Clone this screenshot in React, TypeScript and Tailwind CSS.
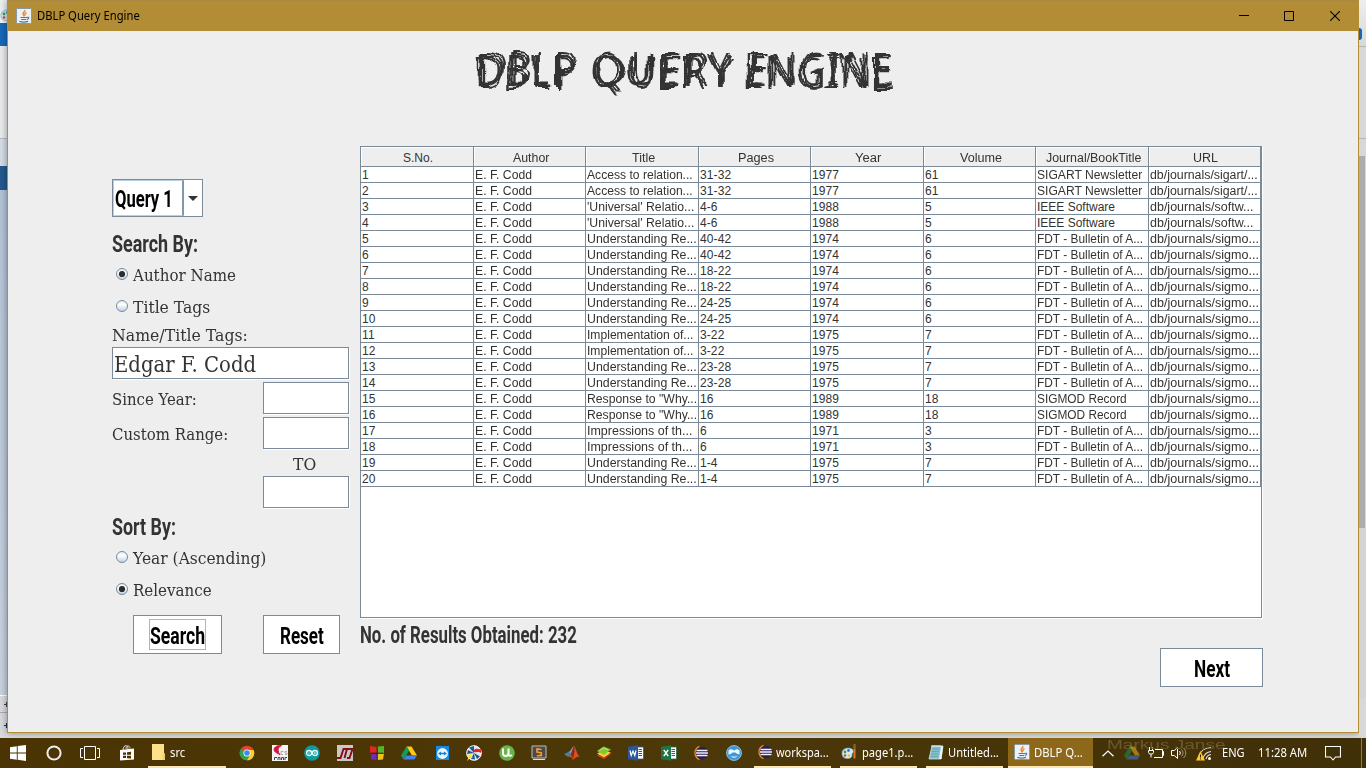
import { useLayoutEffect, useRef, useState, type ReactNode } from "react";

const UI = "font-['Noto_Sans',sans-serif]";
const SERIF = "font-['DejaVu_Serif','Liberation_Serif',serif]";
const HEAVY = "font-['Roboto','Liberation_Sans',sans-serif] font-bold";

/* Stretches or squeezes one line of text to the width of its box. */
function Fit({ className = "", children }: { className?: string; children: string }) {
  const box = useRef<HTMLSpanElement>(null);
  const text = useRef<HTMLSpanElement>(null);
  const [scale, setScale] = useState(1);
  useLayoutEffect(() => {
    if (box.current && text.current) {
      setScale(box.current.clientWidth / text.current.offsetWidth);
    }
  }, [children]);
  return (
    <span ref={box} className={`block shrink-0 whitespace-nowrap ${className}`}>
      <span ref={text} className="inline-block origin-left" style={{ transform: `scaleX(${scale})` }}>
        {children}
      </span>
    </span>
  );
}

function Icon({ children, className = "size-4", box = "0 0 16 16" }: { children: ReactNode; className?: string; box?: string }) {
  return (
    <svg viewBox={box} className={`shrink-0 ${className}`} fill="none">
      {children}
    </svg>
  );
}

const JavaIcon = () => (
  <Icon>
    <rect x=".5" y=".5" width="15" height="15" rx="1" fill="#eef1f4" stroke="#8798a6" />
    <path d="M8.800 2c1 1.500-3 2.600-1.600 4.500.4.700 1 1 .6 1.900M10.500 4.600c-1.600.8-2.200 1.500-1.200 2.900" stroke="#ee7d1c" strokeWidth="1.300" />
    <path d="M4.500 9.500h6.600M5.200 11.500h5M3.400 13.400c2.500.9 6.500.8 8.700 0M11.300 9.300c2-.4 1.800 1.600-.4 2" stroke="#4a7899" strokeWidth="1.200" />
  </Icon>
);
const Eclipse = () => (
  <Icon>
    <path d="M6.500 1.500A7 7 0 0 0 6.500 14.500" stroke="#f28b1d" strokeWidth="1.500" />
    <circle cx="9" cy="8" r="6.300" fill="#2b1f52" />
    <path d="M3.500 5.500h11M3 8h12M3.500 10.500h11" stroke="#f2f0f8" strokeWidth="1.300" />
  </Icon>
);
const Drive = () => (
  <Icon>
    <path d="M5.500 1.500h5L16 10.500h-5z" fill="#fbc916" />
    <path d="M5.500 1.500 8 5.800 2.700 14.500 0 10.500z" fill="#159b58" />
    <path d="M5.300 10.500H16l-2.600 4H2.700z" fill="#4381ee" />
  </Icon>
);
const Office = ({ fill, mark }: { fill: string; mark: ReactNode }) => (
  <Icon>
    <path d="M9 2h6.500v12H9z" fill="#fff" stroke={fill} strokeWidth=".8" />
    <path d="M10.500 4.500H14M10.500 6.500H14M10.500 8.500H14M10.500 10.500H14" stroke={fill} />
    <path d="M0 1.800 10 .2v15.600L0 14.200z" fill={fill} />
    {mark}
  </Icon>
);

const pinned: ReactNode[] = [
  <Icon key="chrome">
    <circle cx="8" cy="8" r="7.300" fill="#e04536" />
    <path d="M8 8 1.700 4.200A7.300 7.300 0 0 0 8 15.300l3.200-5.500z" fill="#2da152" />
    <path d="M8 15.300A7.300 7.300 0 0 0 14.600 4.900H8l3.200 4.900z" fill="#fbcd28" />
    <circle cx="8" cy="8" r="3.600" fill="#fff" /><circle cx="8" cy="8" r="2.800" fill="#4285ec" />
  </Icon>,
  <Icon key="cs">
    <path d="M0 0h16v16H0z" fill="#f5f3f3" />
    <path d="M9.500.5C4 .2 1 3 2.500 6c1 2 4 2.300 5.500 4C5.500 6 5 3 9.500.5z" fill="#d3163c" stroke="#d3163c" />
    <path d="M11.500 6.500H9v3h2M15 6.500h-2V8h2v1.500h-2" stroke="#999" strokeWidth=".8" />
    <path d="M2.500 15v-2.500H5M6 15v-2.500h2V15M9.500 15v-2.500h2V15M15 12.500h-2V15" stroke="#444" />
  </Icon>,
  <Icon key="arduino">
    <circle cx="8" cy="8" r="7.800" fill="#0b9ba0" />
    <circle cx="5.100" cy="8" r="2.500" stroke="#eefafa" strokeWidth="1.300" /><circle cx="10.900" cy="8" r="2.500" stroke="#eefafa" strokeWidth="1.300" />
    <path d="M4.200 8h1.700M10 8h1.800M10.900 7.100v1.800" stroke="#fff" strokeWidth=".7" />
  </Icon>,
  <Icon key="lt">
    <path d="M0 0h16v16H0z" fill="#c9c7c8" />
    <path d="M0 13h3.500L6.500 4H10L7.500 13M10 13h2.500l3-9M9 4h7" stroke="#840d16" strokeWidth="1.900" />
  </Icon>,
  <Icon key="squares">
    <path d="M1 1 8 2v6H1z" fill="#d92b20" /><path d="M8.500 1.500 15 1v7H8.500z" fill="#55b52b" />
    <path d="M2 8.500h6V15l-6-.5z" fill="#6a2fb4" /><path d="M8.500 8.500H15l-1 6-5.500.5z" fill="#efc21c" />
    <path d="M8.200 1.500V15M1.500 8.200h13" stroke="#2a1a10" strokeWidth=".9" />
  </Icon>,
  <Drive key="drive" />,
  <Icon key="tv">
    <rect x="2" y="1" width="13" height="14" fill="#128aec" /><circle cx="8.500" cy="8.500" r="5.400" fill="#e9f4fc" />
    <path d="m4 8.500 3-2v1.300h3V6.500l3 2-3 2V9.200H7v1.300z" fill="#197fd4" />
  </Icon>,
  <Icon key="wheel">
    <circle cx="8" cy="8" r="7.300" fill="#dce8f2" stroke="#fff" />
    <path d="M8 8 3 2.500 8 1zM8 8 1 9l1-4zM8 8l1 6.500-4-.5zM8 8l6 3.500L11 14z" fill="#24568f" />
    <path d="M8 5c2-2 4-1 7-.5V8c-3-2-4 0-7-1z" fill="#e22" /><path d="m1 16 1.500-4L0 10l3 .5L5 8l0 3 2 1.500-3 .5z" fill="#fbe437" />
  </Icon>,
  <Icon key="ut">
    <circle cx="8" cy="8" r="7.800" fill="#69b34a" />
    <path d="M4 3.500v5c0 3 5 3.500 5.500 0v-5 5.500c.2 2.500 2 2 3.500 1" stroke="#fff" strokeWidth="2" />
  </Icon>,
  <Icon key="sublime">
    <path d="M1 1h14v12H1z" fill="#4a4a4a" stroke="#bcbcbc" /><path d="M2 14.500h12" stroke="#ddd" />
    <path d="M10.500 4.500 6 4v3l4.300.8v2.600l-4.500.4" stroke="#ff9b27" strokeWidth="1.600" />
  </Icon>,
  <Icon key="matlab">
    <path d="m0 9 4.500-2L7 9l-3 3z" fill="#3c86b5" /><path d="M4.500 7C7 6 8 2 10 1L7 9z" fill="#6ea6c6" />
    <path d="M10 1c2 2 3 9 6 11-3-1-5 .500-7 3C8 12 6 11 4 12l3-3z" fill="#d9511c" /><path d="M10 1c1 3 .5 8-1 13-1-3-1.500-2-2-5z" fill="#8b2a17" />
  </Icon>,
  <Icon key="stacks">
    <path d="m1 10.500 6-3.500 8 2-7 5z" fill="#e13428" /><path d="m1 8.500 6-3 8 2L8 12.300z" fill="#f2d633" />
    <path d="M1 6 7.500 1.500 15 4.500 8 10z" fill="#83c537" /><path d="m3.500 5.500 4-2.500 4.500 1.700" stroke="#b9e777" />
  </Icon>,
  <Office key="word" fill="#2a5699" mark={<path d="m2 5.500 1.200 5L5 6l1.800 4.500L8 5.500" stroke="#fff" strokeWidth="1.200" />} />,
  <Office key="excel" fill="#207346" mark={<path d="m2.800 4.800 4.400 6.400M7.200 4.800 2.800 11.200" stroke="#fff" strokeWidth="1.500" />} />,
  <Eclipse key="eclipse" />,
  <Icon key="blue">
    <circle cx="8" cy="8" r="7.500" fill="#3d98d8" stroke="#9ccbea" strokeWidth=".8" />
    <path d="M2.500 9.500V5.500L5 4l3 1.500L11 4l2.500 1.500v4l-2.500-.7L9.500 7.500h-3L5 8.800zM4 11.500c2.500 1.500 5.500 1.500 8 0" fill="#eef7fc" />
  </Icon>,
];

const PaintIcon = () => (
  <Icon>
    <path d="M1 9C1 4 9 2.500 12 6c1.500 3-1.500 3-1 5s-2 4-5.500 3.500S1 12 1 9z" fill="#d4e9f3" stroke="#6fa7c1" strokeWidth=".7" />
    <circle cx="4" cy="8" r="1.400" fill="#3fa23c" /><circle cx="7.500" cy="6.500" r="1.400" fill="#3a6fce" />
    <circle cx="4" cy="11.500" r="1.300" fill="#dd442f" /><circle cx="8" cy="11.500" r="1.200" fill="#eabb26" />
    <path d="M13.500 5v9.500" stroke="#dc7721" strokeWidth="2" /><path d="M13.500 0v5" stroke="#8b5a2e" strokeWidth="2.500" />
  </Icon>
);
const NotepadIcon = () => (
  <Icon>
    <path d="M4 2h11l-2 13H1z" fill="#86bfca" stroke="#cfe9ee" strokeWidth=".8" />
    <path d="m13 2 2 .5L13.500 15H11z" fill="#e8f4f6" /><path d="M4 1v2M6 1v2M8 1v2M10 1v2M12 1v2" stroke="#e9eff0" />
    <path d="M4 5h7.500M3.500 7.500h7.500M3 10h7.500M2.500 12.500H10" stroke="#5d9eae" strokeWidth=".7" />
  </Icon>
);

const columns = [
  ["S.No.", "w-[113px]", "w-[30px]"],
  ["Author", "w-[112px]", "w-[36px]"],
  ["Title", "w-[113px]", "w-[23px]"],
  ["Pages", "w-[112px]", "w-[36px]"],
  ["Year", "w-[113px]", "w-[26px]"],
  ["Volume", "w-[112px]", "w-[42px]"],
  ["Journal/BookTitle", "w-[113px]", "w-[95px]"],
  ["URL", "w-[112px]", "w-[25px]"],
];

const textWidths: Record<string, string> = {
  "E. F. Codd": "w-[57px]",
  "Access to relation...": "w-[106px]",
  "'Universal' Relatio...": "w-[107px]",
  "Understanding Re...": "w-[110px]",
  "Implementation of...": "w-[106px]",
  'Response to "Why...': "w-[110px]",
  "Impressions of th...": "w-[105px]",
  "SIGART Newsletter": "w-[105px]",
  "IEEE Software": "w-[78px]",
  "FDT - Bulletin of A...": "w-[106px]",
  "SIGMOD Record": "w-[90px]",
  "db/journals/sigart/...": "w-[108px]",
  "db/journals/softw...": "w-[103px]",
  "db/journals/sigmo...": "w-[109px]",
};

const FDT = "FDT - Bulletin of A...";
const SIGMO = "db/journals/sigmo...";
const UND = "Understanding Re...";
const papers = [
  ["Access to relation...", "31-32", "1977", "61", "SIGART Newsletter", "db/journals/sigart/..."],
  ["'Universal' Relatio...", "4-6", "1988", "5", "IEEE Software", "db/journals/softw..."],
  [UND, "40-42", "1974", "6", FDT, SIGMO],
  [UND, "18-22", "1974", "6", FDT, SIGMO],
  [UND, "24-25", "1974", "6", FDT, SIGMO],
  ["Implementation of...", "3-22", "1975", "7", FDT, SIGMO],
  [UND, "23-28", "1975", "7", FDT, SIGMO],
  ['Response to "Why...', "16", "1989", "18", "SIGMOD Record", SIGMO],
  ["Impressions of th...", "6", "1971", "3", FDT, SIGMO],
  [UND, "1-4", "1975", "7", FDT, SIGMO],
];
const rows = papers.flatMap((p) => [p, p]).map((p, i) => [String(i + 1), "E. F. Codd", ...p]);

function ResultsTable() {
  return (
    <div className="flex h-[472px] w-[902px] flex-col border border-[#7a8a99] bg-white font-['Liberation_Sans',sans-serif] text-[12px] text-[#333] shadow-[1px_1px_0_#fff]">
      <div className="flex h-5 w-[900px] shrink-0">
        {columns.map(([name, w, tw]) => (
          <div key={name} className={`flex h-5 items-center justify-center border-r border-b border-[#7a8a99] bg-[#eee] pt-0.5 pl-0.5 shadow-[inset_1px_1px_0_#fff] ${w}`}>
            <Fit className={tw}>{name}</Fit>
          </div>
        ))}
      </div>
      {rows.map((row) => (
        <div key={row[0]} className="flex h-4 w-[900px] shrink-0">
          {row.map((cell, c) => (
            <div key={c} className={`h-4 border-r border-b border-[#7a8a99] pl-px leading-[16px] ${columns[c][1]}`}>
              {textWidths[cell] ? <Fit className={textWidths[cell]}>{cell}</Fit> : <span className="block tracking-[0.1px]">{cell}</span>}
            </div>
          ))}
        </div>
      ))}
    </div>
  );
}

function Radio({ label, width, checked = false }: { label: string; width: string; checked?: boolean }) {
  return (
    <div className="flex h-8 items-center pl-1">
      <Icon className="mr-[5px] size-3" box="0 0 12 12">
        <defs>
          <linearGradient id="radio" x1="0" y1="0" x2="0" y2="1">
            <stop stopColor="#dce8f3" /><stop offset=".35" stopColor="#fff" /><stop offset="1" stopColor="#b8cfe5" />
          </linearGradient>
        </defs>
        <circle cx="6" cy="6" r="5.500" fill="url(#radio)" stroke="#7a8a99" />
        {checked && <circle cx="6" cy="6" r="3.100" fill="#2c2c2c" />}
      </Icon>
      <Fit className={`pt-1 text-[17px] ${SERIF} ${width}`}>{label}</Fit>
    </div>
  );
}

const Field = ({ width, children }: { width: string; children?: ReactNode }) => (
  <div className={`flex h-8 shrink-0 items-center border border-[#7a8a99] bg-white shadow-[1px_1px_0_#fff] ${width}`}>{children}</div>
);

const Heading = ({ width, children }: { width: string; children: string }) => (
  <Fit className={`text-[24px] leading-8 text-[#333] ${HEAVY} ${width}`}>{children}</Fit>
);

function Button({ box, width, focused = false, children }: { box: string; width: string; focused?: boolean; children: string }) {
  return (
    <button className={`flex h-[39px] items-center justify-center border border-[#7a8a99] bg-white text-black ${box}`}>
      <span className={`flex h-[31px] items-center border pt-0.5 ${focused ? "border-[#a3b8cc]" : "border-transparent"}`}>
        <Fit className={`text-[24px] leading-7 ${HEAVY} ${width}`}>{children}</Fit>
      </span>
    </button>
  );
}

function SearchForm() {
  return (
    <div className="flex w-[237px] flex-col pt-[33px] text-[#333]">
      <div className="flex h-[38px] w-[91px] border border-[#7a8a99] bg-white">
        <div className="flex w-[71px] items-center border border-r-2 border-[#b8cfe5] border-r-[#8397aa] pt-0.5 pl-px">
          <Fit className={`w-[58px] text-[24px] leading-8 text-black ${HEAVY}`}>Query 1</Fit>
        </div>
        <div className="flex flex-1 items-center justify-center">
          <Icon className="h-[5px] w-[10px]" box="0 0 10 5"><path d="M0 0h10L5 5z" fill="#333" /></Icon>
        </div>
      </div>
      <div className="mt-[11px] h-[30px]"><Heading width="w-[86px]">Search By:</Heading></div>
      <Radio label="Author Name" width="w-[103px]" checked />
      <Radio label="Title Tags" width="w-[77px]" />
      <div className="flex h-[25px] items-center pt-0.5"><Fit className={`text-[17px] w-[136px] ${SERIF}`}>Name/Title Tags:</Fit></div>
      <Field width="w-[237px]"><Fit className={`ml-px w-[142px] pt-0.5 text-[23px] leading-7 ${SERIF}`}>Edgar F. Codd</Fit></Field>
      <div className="mt-[3px] flex items-center justify-between">
        <Fit className={`w-[85px] pt-[3px] text-[17px] ${SERIF}`}>Since Year:</Fit><Field width="w-[86px]" />
      </div>
      <div className="mt-[3px] flex items-center justify-between">
        <Fit className={`w-[116px] pt-[3px] text-[17px] ${SERIF}`}>Custom Range:</Fit><Field width="w-[86px]" />
      </div>
      <div className="flex h-[27px] items-center pt-1 pl-[181px]"><Fit className={`text-[17px] w-[23px] ${SERIF}`}>TO</Fit></div>
      <div className="flex justify-end"><Field width="w-[86px]" /></div>
      <div className="mt-[3px] h-[30px]"><Heading width="w-[64px]">Sort By:</Heading></div>
      <Radio label="Year (Ascending)" width="w-[133px]" />
      <Radio label="Relevance" width="w-[79px]" checked />
      <div className="mt-[10px] flex pl-[21px]">
        <Button box="w-[89px] mr-[41px]" width="w-[55px]" focused>Search</Button>
        <Button box="w-[77px]" width="w-[44px]">Reset</Button>
      </div>
    </div>
  );
}

function SketchTitle() {
  return (
    <h1 className="flex h-[115px] items-start pt-[11px] pl-[467px] font-['Noto_Sans',sans-serif] text-[47px] leading-[54px] font-medium text-[#333]">
      <svg className="size-0">
        <filter id="sketch" x="-5%" y="-10%" width="110%" height="120%" colorInterpolationFilters="sRGB">
          <feTurbulence type="fractalNoise" baseFrequency=".045 .03" numOctaves="1" seed="3" result="n1" />
          <feTurbulence type="fractalNoise" baseFrequency=".035 .03" numOctaves="1" seed="18" result="n2" />
          <feTurbulence type="fractalNoise" baseFrequency=".05 .04" numOctaves="1" seed="41" result="n3" />
          <feMorphology in="SourceGraphic" operator="erode" radius="1 .5" result="thin" />
          <feDisplacementMap in="thin" in2="n1" scale="12" xChannelSelector="R" yChannelSelector="G" result="a" />
          <feOffset in="thin" dx="2" dy="-1" result="b0" />
          <feDisplacementMap in="b0" in2="n2" scale="14" xChannelSelector="G" yChannelSelector="R" result="b" />
          <feOffset in="thin" dx="-2" dy="1" result="c0" />
          <feDisplacementMap in="c0" in2="n3" scale="14" xChannelSelector="B" yChannelSelector="G" result="c" />
          <feOffset in="thin" dx="0" dy="2" result="d0" />
          <feDisplacementMap in="d0" in2="n2" scale="16" xChannelSelector="B" yChannelSelector="R" result="d" />
          <feMerge><feMergeNode in="a" /><feMergeNode in="b" /><feMergeNode in="c" /><feMergeNode in="d" /></feMerge>
        </filter>
      </svg>
      <span className="flex [filter:url(#sketch)]">
        <Fit className="mr-[15px] w-[102px]">DBLP</Fit>
        <Fit className="mr-[12px] w-[141px]">QUERY</Fit>
        <Fit className="w-[147px]">ENGINE</Fit>
      </span>
    </h1>
  );
}

function QueryWindow() {
  return (
    <div className="flex h-[733px] w-[1352px] shrink-0 flex-col border border-t-0 border-[#b38e36] bg-[#eee] shadow-[0_0_7px_rgba(0,0,0,.4)]">
      <div className="flex h-[31px] shrink-0 items-center border-t border-[#a9883f] bg-[#b38d35] pl-2">
        <JavaIcon />
        <Fit className={`ml-[5px] w-[103px] text-[12px] text-black ${UI}`}>DBLP Query Engine</Fit>
        <div className="ml-auto flex text-black">
          <Icon className="mr-[35px] size-[10px]" box="0 0 10 10"><path d="M0 4.500h10" stroke="currentColor" /></Icon>
          <Icon className="mr-[36px] size-[10px]" box="0 0 10 10"><path d="M.5.5h9v9h-9z" stroke="currentColor" /></Icon>
          <Icon className="mr-[18px] size-[10px]" box="0 0 10 10"><path d="m0 0 10 10M10 0 0 10" stroke="currentColor" strokeWidth="1.100" /></Icon>
        </div>
      </div>
      <SketchTitle />
      <div className="flex pl-[104px]">
        <SearchForm />
        <div className="ml-[11px] flex w-[903px] flex-col">
          <ResultsTable />
          <div className="h-[30px] pt-px"><Heading width="w-[217px]">No. of Results Obtained: 232</Heading></div>
          <div className="flex justify-end"><Button box="w-[103px]" width="w-[36px]">Next</Button></div>
        </div>
      </div>
    </div>
  );
}

function Task({ box, icon, label, width, active = false }: { box: string; icon: ReactNode; label: string; width: string; active?: boolean }) {
  return (
    <div className={`flex h-[30px] shrink-0 items-center border-b-2 border-[#fde5b0] ${active ? "bg-[#8d681a]" : ""} ${box}`}>
      {icon}
      <Fit className={`pt-px ${width}`}>{label}</Fit>
    </div>
  );
}

function Taskbar() {
  return (
    <div className={`relative flex h-[30px] w-[1366px] shrink-0 items-center overflow-hidden bg-linear-to-r from-[#4b3403] via-[#4d3808] to-[#403008] text-[12px] text-white ${UI}`}>
      <div className="absolute top-0 left-[1107px] text-[#6c5932]"><Fit className="w-[119px] font-['Liberation_Sans',sans-serif] text-[12px] leading-[14px]">Markus Janse</Fit></div>
      <Icon className="ml-[10px] size-4"><path d="m0 2.200 6.800-.9v6.200H0zM7.700 1.100 16 0v7.500H7.700zM0 8.400h6.800v6.300L0 13.800zM7.700 8.400H16V16l-8.300-1.200z" fill="#fff" /></Icon>
      <Icon className="ml-5 size-4"><circle cx="8" cy="8" r="6.600" stroke="#eee" strokeWidth="2" /></Icon>
      <Icon className="ml-[18px] h-4 w-5" box="0 0 20 16"><path d="M4.500 1.500h11v13h-11zM3 3.500H.5v9H3M17 3.500h2.500v9H17" stroke="#fff" /></Icon>
      <Icon className="ml-[19px] size-4">
        <path d="m1 5 14-1.500v11L1 15.500z" fill="#fff" /><path d="M4 5C4 0 9-1 9 4M7 4c0-4 4-4 4-.5" stroke="#ddd" />
        <path d="M4 7.500h3v2.300H4zM8 7.200l4-.4v3H8zM4 10.800h3V13H4zM8 10.800h4v2.800l-4-.4z" fill="#4b3403" />
      </Icon>
      <Task box="ml-[13px] w-[78px] pl-1" label="src" width="ml-[5px] w-[15px]" icon={
        <Icon className="h-4 w-[13px]" box="0 0 13 16"><path d="M0 0h12v9l1 1v6H0z" fill="#ffe08a" /><path d="M10.500 9.500H13V16h-2.500z" fill="#f4cd67" /></Icon>
      } />
      <div className="ml-[5px] flex w-[519px] shrink-0">
        {pinned.map((icon, i) => <div key={i} className="flex flex-1 justify-center">{icon}</div>)}
      </div>
      <Task box="ml-[4px] w-[77px] pl-[3px]" label="workspa..." width="ml-[3px] w-[53px]" icon={<Eclipse />} />
      <Task box="ml-[9px] w-[77px] pl-[1px]" label="page1.p..." width="ml-[5px] w-[51px]" icon={<PaintIcon />} />
      <Task box="ml-[9px] w-[77px] pl-[2px]" label="Untitled..." width="ml-[4px] w-[51px]" icon={<NotepadIcon />} />
      <Task box="ml-[5px] w-[85px] pl-[6px]" label="DBLP Q..." width="ml-[4px] w-[49px]" icon={<JavaIcon />} active />
      <Icon className="ml-[9px] h-[7px] w-3" box="0 0 12 7"><path d="m.5 6.300 5.500-5.300 5.500 5.300" stroke="#fff" strokeWidth="1.200" /></Icon>
      <div className="ml-[10px] opacity-50"><Drive /></div>
      <Icon className="ml-[8px] h-4 w-4"><path d="M7 4.500h7.500v8H6M14.500 6.500h1v4h-1M1.500 2v3M4.500 2v3M.5 5.500h5v2l-1 1.500h-3l-1-1.500zM3 9v3.500" stroke="#fff" /></Icon>
      <Icon className="ml-[7px] h-4 w-[17px]" box="0 0 17 16">
        <path d="M.5 5.500h2.800L6.500 2.500v11l-3.200-3H.5z" stroke="#fff" /><path d="M8.500 6c1 1 1 3 0 4" stroke="#fff" /><path d="M10.500 4.500c2 2 2 5 0 7M12.500 3c3 3 3 7 0 10" stroke="#a79a78" />
      </Icon>
      <Icon className="ml-[8px] h-4 w-4">
        <path d="M3 11C4 7 8 3 15 2.500M7 13c1-3 4-6 8-6.500M10 14c.5-2 2-4 5-4.500" stroke="#e4dfd2" strokeWidth="1.100" /><circle cx="13.500" cy="13.500" r="1.500" fill="#fff" />
        <path d="m4.500 6 4.500 9.500H0z" fill="#ffc928" /><path d="M4.500 9.500v3M4.500 13.500v1" stroke="#352400" />
      </Icon>
      <Fit className="ml-[10px] w-[23px]">ENG</Fit>
      <Fit className="ml-[13px] w-[49px]">11:28 AM</Fit>
      <Icon className="ml-[18px] size-4"><path d="M.5 1.500h15v10.500h-5L8 15l-2.500-3h-5z" stroke="#fff" strokeWidth="1.100" /></Icon>
      <div className="ml-auto h-[30px] w-[5px] border-l border-[#8c7c58]" />
    </div>
  );
}

export default function App() {
  return (
    <div className="flex h-[768px] w-[1366px] flex-col overflow-hidden bg-[#dcdcdc]">
      <div className="flex h-[738px] shrink-0">
        <div className="flex w-[7px] shrink-0 flex-col bg-[#d9dadd]">
          <div className="h-[23px] overflow-hidden bg-[#eceff0] pt-1.5"><PaintIcon /></div>
          <div className="h-[23px] bg-[#1769b8]" />
          <div className="h-[92px] bg-[#e9eaec]" />
          <div className="h-[28px] border-t border-[#bbb] bg-[#d5dce5]" />
          <div className="h-[24px] bg-[#24598f]" />
          <div className="h-[505px] bg-linear-to-b from-[#b3c3d7] to-[#c8d1df]" />
          <div className="h-[17px] border-t border-white pt-1.5"><Icon className="ml-1 size-[5px]" box="0 0 5 5"><path d="M0 2.500h5M2.500 0v5" stroke="#444" /></Icon></div>
          <div className="flex-1 border-t border-[#aaa] pt-2.5"><Icon className="ml-1 size-[5px]" box="0 0 5 5"><path d="M0 2.500h5M2.500 0v5" stroke="#1a2e58" /></Icon></div>
        </div>
        <QueryWindow />
        <div className="flex flex-1 flex-col bg-[#d8d8d8]">
          <div className="h-[46px] bg-linear-to-b from-[#eee] to-[#d8d8d8] pt-[28px]"><div className="h-3 w-[3px] rounded-r-full bg-[#1467b4]" /></div>
          <div className="h-[92px] border-t border-[#b5b5b5]" />
          <div className="h-[18px] border-t border-[#b5b5b5]" />
          <div className="h-[372px] w-[6px] bg-[#adadad]" />
          <div className="h-[170px] bg-[#d4d4d4]" />
        </div>
      </div>
      <Taskbar />
    </div>
  );
}
